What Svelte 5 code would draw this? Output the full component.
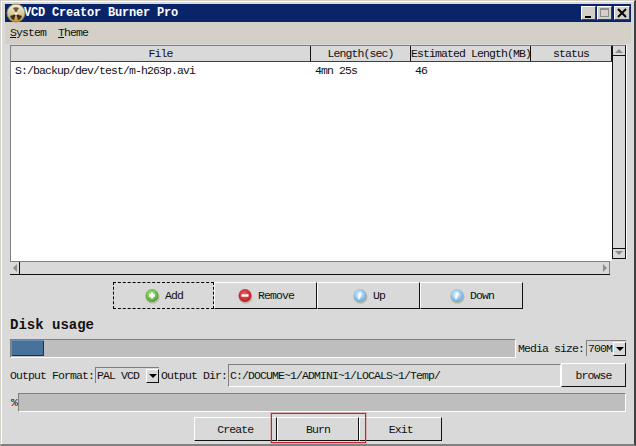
<script>
    const columns = [
        { label: 'File', width: 300 },
        { label: 'Length(sec)', width: 100 },
        { label: 'Estimated Length(MB)', width: 120 },
        { label: 'status', width: 81 }
    ];
    const actions = [
        { label: 'Add', colour: 'green', mark: 'plus' },
        { label: 'Remove', colour: 'red', mark: 'minus' },
        { label: 'Up', colour: 'blue', mark: 'none' },
        { label: 'Down', colour: 'blue', mark: 'none' }
    ];
</script>

<div class="window">
    <div class="titlebar">
        <svg class="app-icon" width="20" height="20" viewBox="0 0 20 20">
            <defs>
                <linearGradient id="disc" x1="0" y1="0" x2="0" y2="1">
                    <stop offset="0" stop-color="#f4efe0"></stop>
                    <stop offset="0.55" stop-color="#d8c898"></stop>
                    <stop offset="1" stop-color="#c88c20"></stop>
                </linearGradient>
            </defs>
            <circle cx="10" cy="10" r="9" fill="url(#disc)" stroke="#9a8a60" stroke-width="1"></circle>
            <path d="M10 11 L4 13 A6 6 0 0 0 8 17 Z" fill="#3a3020"></path>
            <path d="M10 11 L16 13 A6 6 0 0 1 12 17 Z" fill="#3a3020"></path>
            <path d="M10 10 L7 5 A6 6 0 0 1 13 5 Z" fill="#6a5c3c"></path>
            <circle cx="10" cy="10.5" r="1.5" fill="#f0e8d0"></circle>
        </svg>
        <span class="title">VCD Creator Burner Pro</span>
        <div class="title-buttons">
            <span class="win-btn"><svg width="13" height="12"><rect x="3" y="9" width="6" height="2" fill="#000"></rect></svg></span>
            <span class="win-btn"><svg width="13" height="12"><rect x="2.5" y="1.5" width="8" height="8" fill="none" stroke="#8c8c8c"></rect><rect x="2" y="1" width="9" height="2" fill="#8c8c8c"></rect></svg></span>
            <span class="win-btn close"><svg width="14" height="12"><path d="M3 2 L11 10 M11 2 L3 10" stroke="#000" stroke-width="2"></path></svg></span>
        </div>
    </div>

    <div class="menubar">
        <span><u>S</u>ystem</span>
        <span><u>T</u>heme</span>
    </div>

    <div class="list-area">
        <div class="list-main">
            <div class="list">
                <div class="header">
                    {#each columns as col}
                        <div class="head-cell" style="width: {col.width}px">{col.label}</div>
                    {/each}
                </div>
                <div class="row">
                    <div class="cell" style="width: 300px">S:/backup/dev/test/m-h263p.avi</div>
                    <div class="cell" style="width: 100px">4mn 25s</div>
                    <div class="cell">46</div>
                </div>
            </div>
            <div class="hscroll">
                <span class="arrow-btn"><svg width="6" height="8"><path d="M5 0 V8 L1 4 Z" fill="#8c8c8c"></path></svg></span>
                <span class="scroll-fill"></span>
                <span class="arrow-btn"><svg width="6" height="8"><path d="M1 0 V8 L5 4 Z" fill="#8c8c8c"></path></svg></span>
            </div>
        </div>
        <div class="vscroll">
            <span class="arrow-btn v"><svg width="8" height="5"><path d="M0 5 H8 L4 1 Z" fill="#8c8c8c"></path></svg></span>
            <span class="scroll-fill"></span>
            <span class="arrow-btn v"><svg width="8" height="5"><path d="M0 0 H8 L4 4 Z" fill="#8c8c8c"></path></svg></span>
        </div>
    </div>

    <div class="actions">
        {#each actions as action, i}
            <button class="action" class:focused={i === 0}>
                <svg width="16" height="16" viewBox="0 0 16 16">
                    <defs>
                        <radialGradient id="ball-{i}" cx="0.45" cy="0.4" r="0.65">
                            {#if action.colour === 'green'}
                                <stop offset="0" stop-color="#b8e890"></stop>
                                <stop offset="1" stop-color="#3e9a20"></stop>
                            {:else if action.colour === 'red'}
                                <stop offset="0" stop-color="#f06060"></stop>
                                <stop offset="1" stop-color="#b81020"></stop>
                            {:else}
                                <stop offset="0" stop-color="#e8f6ff"></stop>
                                <stop offset="1" stop-color="#5aa0dc"></stop>
                            {/if}
                        </radialGradient>
                    </defs>
                    <ellipse cx="8.5" cy="9" rx="7" ry="6.8" fill="#b8b8a8"></ellipse>
                    <circle cx="8" cy="7.5" r="6.5" fill="url(#ball-{i})"></circle>
                    {#if action.mark === 'plus'}
                        <path d="M5 7.5 H11 M8 4.5 V10.5" stroke="#fff" stroke-width="2.4"></path>
                    {:else if action.mark === 'minus'}
                        <path d="M4.5 7.5 H11.5" stroke="#fff" stroke-width="2.4"></path>
                    {:else}
                        <path d="M8 3.5 L10 6 L7 12 L5.5 9 Z" fill="#fff" opacity="0.85"></path>
                    {/if}
                </svg>
                <span>{action.label}</span>
            </button>
        {/each}
    </div>

    <h2 class="disk-title">Disk usage</h2>

    <div class="usage-row">
        <div class="bar usage-bar"><div class="usage-chunk"></div></div>
        <span class="label media-label">Media size:</span>
        <div class="combo media-combo">
            <span>700M</span>
            <span class="combo-btn"><svg width="8" height="4"><path d="M0 0 H8 L4 4 Z" fill="#000"></path></svg></span>
        </div>
    </div>

    <div class="output-row">
        <span class="label">Output Format:</span>
        <div class="combo format-combo">
            <span>PAL VCD</span>
            <span class="combo-btn"><svg width="8" height="4"><path d="M0 0 H8 L4 4 Z" fill="#000"></path></svg></span>
        </div>
        <span class="label dir-label">Output Dir:</span>
        <div class="dir-input">C:/DOCUME~1/ADMINI~1/LOCALS~1/Temp/</div>
        <button class="browse">browse</button>
    </div>

    <div class="percent-row">
        <span class="label">%</span>
        <div class="bar percent-bar"></div>
    </div>

    <div class="bottom">
        <button class="bottom-btn">Create</button>
        <button class="bottom-btn">Burn</button>
        <button class="bottom-btn">Exit</button>
    </div>

    <div class="annotation"></div>
</div>

<style>
    :global(body) {
        margin: 0;
        background: #d4d0c8;
    }

    .window {
        position: relative;
        box-sizing: border-box;
        width: 636px;
        height: 446px;
        padding: 4px 4px 0 4px;
        background: #d9d9d9;
        border-right: 2px solid #404040;
        border-bottom: 2px solid #808080;
        border-top: 1px solid #d4d0c8;
        border-left: 1px solid #d4d0c8;
        box-shadow: inset 1px 1px 0 #fff;
        font-family: "Liberation Mono", monospace;
        font-size: 11.5px;
        letter-spacing: -0.9px;
        color: #111;
        overflow: hidden;
    }

    .titlebar {
        display: flex;
        align-items: center;
        height: 18px;
        margin: -1px -1px 0 0;
        background: #0a246a;
        color: #fff;
    }

    .app-icon {
        margin: 0 -2px 0 1px;
        flex: none;
    }

    .title {
        font-weight: bold;
        font-size: 12px;
        letter-spacing: -0.2px;
        font-family: "Liberation Mono", monospace;
    }

    .title-buttons {
        margin-left: auto;
        margin-right: 1px;
        display: flex;
    }

    .win-btn {
        background: #d4d0c8;
        border-top: 1px solid #fff;
        border-left: 1px solid #fff;
        border-right: 1px solid #404040;
        border-bottom: 1px solid #404040;
        box-sizing: border-box;
        width: 15px;
        height: 14px;
        margin-left: 1px;
        display: flex;
        align-items: center;
        justify-content: center;
    }

    .win-btn.close {
        width: 16px;
        margin-left: 2px;
    }

    .win-btn svg {
        flex: none;
    }

    .menubar {
        display: flex;
        gap: 12px;
        height: 21px;
        padding-bottom: 1px;
        box-sizing: content-box;
        align-items: center;
        padding-left: 5px;
        background: #d4d0c8;
        margin: 0 -1px 0 0;
    }

    .list-area {
        display: flex;
        align-items: flex-start;
        height: 230px;
        margin: 1px 4px 0 5px;
    }

    .list-main {
        width: 602px;
        height: 100%;
        display: flex;
        flex-direction: column;
    }

    .list {
        flex: 1;
        background: #fff;
        border-top: 1px solid #808080;
        border-left: 1px solid #808080;
    }

    .header {
        display: flex;
        height: 15px;
        background: #d9d9d9;
        border-bottom: 1px solid #404040;
    }

    .head-cell {
        box-sizing: border-box;
        text-align: center;
        line-height: 16px;
        border-right: 1px solid #111;
        white-space: nowrap;
    }

    .row {
        display: flex;
        padding: 2px 0 0 4px;
        line-height: 14px;
    }

    .cell {
        white-space: nowrap;
    }

    .hscroll {
        display: flex;
        box-sizing: border-box;
        width: 600px;
        height: 14px;
        background: #d9d9d9;
        border-bottom: 1px solid #111;
        border-top: 1px solid #808080;
    }

    .vscroll {
        box-sizing: border-box;
        width: 14px;
        height: 214px;
        display: flex;
        flex-direction: column;
        background: #d9d9d9;
        border-left: 1px solid #111;
        border-right: 1px solid #111;
        border-top: 1px solid #808080;
        border-bottom: 1px solid #111;
        box-shadow: 1px 0 0 #fff;
    }

    .scroll-fill {
        flex: 1;
    }

    .hscroll .arrow-btn:first-child {
        border-right: 1px solid #111;
    }

    .arrow-btn {
        flex: none;
        box-sizing: border-box;
        height: 12px;
        min-width: 10px;
        background: #d9d9d9;
        border-right: 1px solid #808080;
        display: flex;
        align-items: center;
        justify-content: center;
    }

    .arrow-btn.v {
        height: 9px;
        border: none;
    }

    .arrow-btn.v:first-child {
        border-bottom: 1px solid #111;
        height: 10px;
    }

    .arrow-btn.v:last-child {
        border-top: 1px solid #111;
        height: 10px;
    }

    .actions {
        display: flex;
        margin: 7px 0 0 108px;
    }

    button {
        font: inherit;
        letter-spacing: inherit;
        color: inherit;
        padding: 0;
        background: #d9d9d9;
        box-sizing: border-box;
        border-style: solid;
        border-width: 1px;
        border-color: #fff #111 #111 #fff;
    }

    .action {
        width: 103px;
        height: 27px;
        display: flex;
        align-items: center;
        justify-content: center;
        gap: 5px;
    }

    .action.focused {
        width: 101px;
        border: 1px dashed #000;
    }

    .disk-title {
        margin: 8px 0 0 5px;
        font-size: 14px;
        line-height: 16px;
        font-weight: bold;
        letter-spacing: 0;
        font-family: "Liberation Mono", monospace;
    }

    .usage-row {
        display: flex;
        align-items: center;
        height: 18px;
        margin: 6px 4px 0 5px;
    }

    .bar {
        box-sizing: border-box;
        background: #bebebe;
        border-top: 1px solid #808080;
        border-left: 1px solid #808080;
        border-right: 1px solid #fff;
        border-bottom: 1px solid #fff;
    }

    .usage-bar {
        flex: none;
        width: 506px;
        height: 19px;
        padding: 0;
    }

    .usage-chunk {
        width: 33px;
        height: 16px;
        background: #47729c;
        box-shadow: inset 1px 1px 0 #6b8fb5, inset -1px -1px 0 #22303f;
    }

    .label {
        white-space: nowrap;
    }

    .media-label {
        margin-left: 2px;
    }

    .combo {
        flex: none;
        box-sizing: border-box;
        display: flex;
        align-items: center;
        justify-content: space-between;
        height: 16px;
        padding-left: 1px;
        border-top: 1px solid #808080;
        border-left: 1px solid #808080;
        background: #d9d9d9;
    }

    .combo-btn {
        width: 13px;
        height: 14px;
        box-sizing: border-box;
        border-right: 1px solid #111;
        border-bottom: 1px solid #111;
        border-top: 1px solid #fff;
        border-left: 1px solid #fff;
        display: flex;
        align-items: center;
        justify-content: center;
    }

    .media-combo {
        width: 40px;
        margin-left: 2px;
    }

    .format-combo {
        width: 64px;
        margin-left: 1px;
    }

    .output-row {
        display: flex;
        align-items: center;
        height: 24px;
        margin: 6px 4px 0 5px;
    }

    .dir-label {
        margin-left: 2px;
    }

    .dir-input {
        flex: 1;
        box-sizing: border-box;
        height: 23px;
        line-height: 21px;
        padding-left: 1px;
        margin-left: 1px;
        border-top: 1px solid #808080;
        border-left: 1px solid #808080;
        border-right: 1px solid #fff;
        border-bottom: 1px solid #fff;
        white-space: nowrap;
    }

    .browse {
        width: 65px;
        height: 24px;
    }

    .percent-row {
        display: flex;
        align-items: center;
        height: 18px;
        margin: 6px 4px 0 6px;
    }

    .percent-bar {
        flex: 1;
        height: 19px;
        margin-left: 1px;
    }

    .bottom {
        display: flex;
        margin: 6px 0 0 189px;
    }

    .bottom-btn {
        width: 82.67px;
        height: 24px;
    }

    .annotation {
        position: absolute;
        left: 270px;
        top: 412px;
        width: 95px;
        height: 30px;
        box-sizing: border-box;
        border: 1px solid #cc2030;
        box-shadow: 0 0 0 1px rgba(220, 80, 90, 0.3);
    }
</style>
